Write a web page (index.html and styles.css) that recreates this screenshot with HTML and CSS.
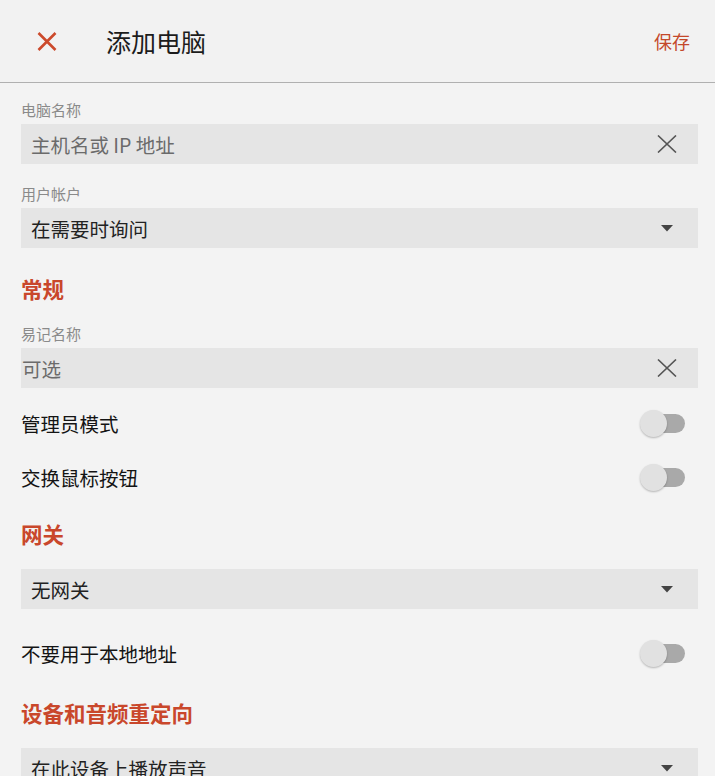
FILE: index.html
```html
<!DOCTYPE html>
<html lang="zh-CN">
<head>
<meta charset="utf-8">
<title>添加电脑</title>
<link rel="stylesheet" href="styles.css">
</head>
<body>
<div class="app">
  <header class="topbar">
    <button class="close-btn" aria-label="关闭">
      <svg width="20" height="19" viewBox="0 0 20 19"><path d="M1.5 1 L18.5 18 M18.5 1 L1.5 18" stroke="#cc4a2c" stroke-width="2.6" fill="none"/></svg>
    </button>
    <h1 class="title">添加电脑</h1>
    <span class="save">保存</span>
  </header>

  <main class="content">
    <div class="label first">电脑名称</div>
    <div class="field">
      <span class="field-text placeholder">主机名或 IP 地址</span>
      <span class="field-icon">
        <svg width="20" height="18" viewBox="0 0 20 18"><path d="M1 0.5 L19 17.5 M19 0.5 L1 17.5" stroke="#555" stroke-width="1.6" fill="none"/></svg>
      </span>
    </div>

    <div class="label">用户帐户</div>
    <div class="field">
      <span class="field-text">在需要时询问</span>
      <span class="field-icon">
        <svg width="12" height="7" viewBox="0 0 12 7"><path d="M0 0 H12 L6 6.5 Z" fill="#444"/></svg>
      </span>
    </div>

    <h2 class="section s-general">常规</h2>
    <div class="label after-section">易记名称</div>
    <div class="field">
      <span class="field-text placeholder flush">可选</span>
      <span class="field-icon">
        <svg width="20" height="18" viewBox="0 0 20 18"><path d="M1 0.5 L19 17.5 M19 0.5 L1 17.5" stroke="#555" stroke-width="1.6" fill="none"/></svg>
      </span>
    </div>

    <div class="toggle-row first-row">
      <span class="row-text">管理员模式</span>
      <span class="toggle"><span class="track"></span><span class="thumb"></span></span>
    </div>
    <div class="toggle-row">
      <span class="row-text">交换鼠标按钮</span>
      <span class="toggle"><span class="track"></span><span class="thumb"></span></span>
    </div>

    <h2 class="section s-gateway">网关</h2>
    <div class="field">
      <span class="field-text">无网关</span>
      <span class="field-icon">
        <svg width="12" height="7" viewBox="0 0 12 7"><path d="M0 0 H12 L6 6.5 Z" fill="#444"/></svg>
      </span>
    </div>

    <div class="toggle-row after-field">
      <span class="row-text">不要用于本地地址</span>
      <span class="toggle"><span class="track"></span><span class="thumb"></span></span>
    </div>

    <h2 class="section s-devices">设备和音频重定向</h2>
    <div class="field">
      <span class="field-text">在此设备上播放声音</span>
      <span class="field-icon">
        <svg width="12" height="7" viewBox="0 0 12 7"><path d="M0 0 H12 L6 6.5 Z" fill="#444"/></svg>
      </span>
    </div>
  </main>
</div>
</body>
</html>
```

FILE: styles.css
```css
* { box-sizing: border-box; }

html, body {
  margin: 0;
  padding: 0;
  height: 100%;
  overflow: hidden;
  background: #f3f3f3;
  font-family: "Noto Sans CJK SC", "Noto Sans", sans-serif;
}

.app {
  width: 715px;
}

.topbar {
  height: 83px;
  display: flex;
  align-items: center;
  background: #f2f2f2;
  border-bottom: 1px solid #b0b0b0;
  padding: 0 25px 0 37px;
}

.close-btn {
  border: 0;
  background: none;
  padding: 0;
  width: 20px;
  height: 19px;
  display: flex;
}

.title {
  margin: 0 0 0 49px;
  font-size: 25px;
  font-weight: 400;
  color: #1c1c1c;
  line-height: 30px;
  flex: 1;
}

.save {
  font-size: 18px;
  color: #c4482a;
  line-height: 24px;
}

.content {
  padding: 0 17px 0 21px;
  display: flex;
  flex-direction: column;
}

.label {
  font-size: 15px;
  line-height: 20px;
  color: #8a8a8a;
  margin: 20px 0 4px;
}

.label.first {
  margin-top: 17px;
}

.label.after-section {
  margin-top: 0;
}

.field {
  height: 40px;
  flex-shrink: 0;
  background: #e5e5e5;
  display: flex;
  align-items: center;
  padding: 0 21px 0 10px;
}

.field-text {
  flex: 1;
  font-size: 19.5px;
  color: #222;
  white-space: nowrap;
}

.field-text.placeholder {
  color: #6b6b6b;
}

.field-text.flush {
  margin-left: -9px;
}

.field-icon {
  width: 20px;
  display: flex;
  justify-content: center;
  align-items: center;
}

.section {
  margin: 0 0 20px;
  font-size: 21.5px;
  font-weight: 700;
  line-height: 30px;
  color: #c9472b;
}

.s-general { margin-top: 26px; }
.s-gateway { margin-top: 15px; }
.s-devices { margin-top: 18px; }

.toggle-row {
  height: 54px;
  flex-shrink: 0;
  display: flex;
  align-items: center;
  justify-content: space-between;
}

.toggle-row.first-row { margin-top: 8px; }
.toggle-row.after-field { margin-top: 17px; }

.row-text {
  font-size: 19.5px;
  color: #141414;
}

.toggle {
  position: relative;
  width: 45px;
  height: 27px;
  margin-right: 13px;
}

.track {
  position: absolute;
  left: 9px;
  right: 0;
  top: 4px;
  height: 19px;
  border-radius: 10px;
  background: #a9a9a9;
}

.thumb {
  position: absolute;
  left: 0;
  top: 0;
  width: 27px;
  height: 27px;
  border-radius: 50%;
  background: #e1e1e1;
  box-shadow: 0 1px 2px rgba(0,0,0,0.25);
}
```
